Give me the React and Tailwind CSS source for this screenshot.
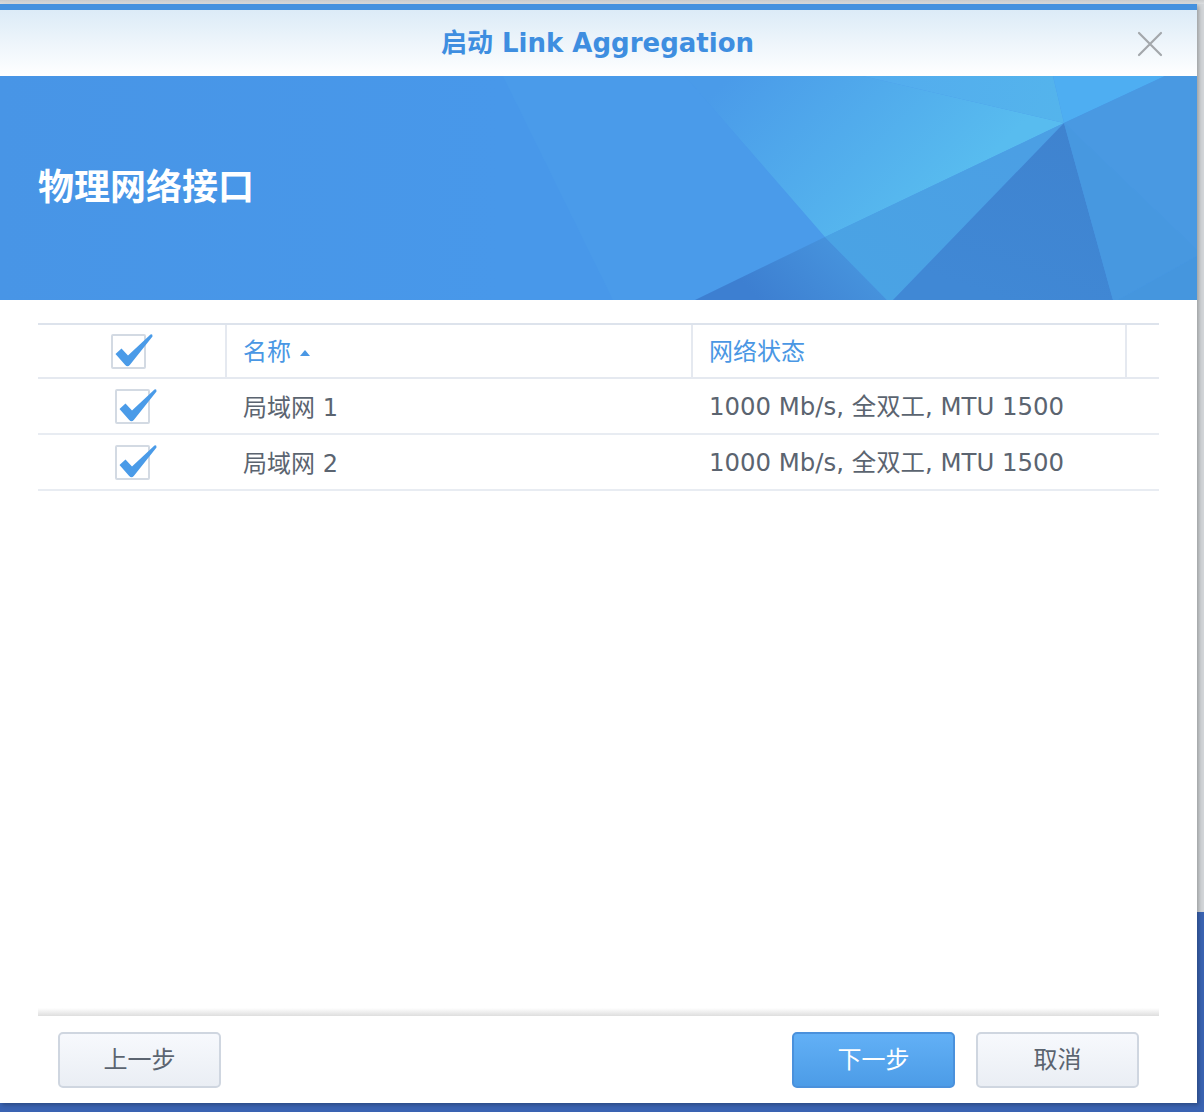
import React from "react";

const FONT = { fontFamily: '"DejaVu Sans", "Noto Sans CJK SC", sans-serif' };

function CheckMark() {
  return (
    <svg width="42" height="40" viewBox="0 0 42 40" className="absolute left-[-1px] top-[-6px]">
      <path
        d="M3.5 24 L9.5 18.5 L16 25.5 L38.5 4.5 Q40.8 3.8 40.5 6.5 L17.8 35 Q15.5 37.5 13.2 35 Z"
        fill="#4a9be8"
      />
    </svg>
  );
}

function CheckBox({ className = "" }) {
  return (
    <div className={`relative w-[35px] h-[35px] border-2 border-[#d3dae3] rounded-[2px] bg-white ${className}`}>
      <CheckMark />
    </div>
  );
}

function Banner() {
  return (
    <div className="relative h-[224px] bg-[#4797e8] overflow-hidden flex items-center pl-[38px]">
      <svg
        className="absolute inset-0"
        width="1197"
        height="224"
        viewBox="0 0 1197 224"
        preserveAspectRatio="none"
      >
        <defs>
          <linearGradient id="centerFacet" x1="720" y1="10" x2="890" y2="180" gradientUnits="userSpaceOnUse">
            <stop offset="0" stopColor="#4a9be9" />
            <stop offset="1" stopColor="#58bcef" />
          </linearGradient>
          <linearGradient id="topFacet" x1="870" y1="0" x2="1060" y2="50" gradientUnits="userSpaceOnUse">
            <stop offset="0" stopColor="#53acee" />
            <stop offset="1" stopColor="#54b4ec" />
          </linearGradient>
          <linearGradient id="lowLeft" x1="825" y1="160" x2="760" y2="224" gradientUnits="userSpaceOnUse">
            <stop offset="0" stopColor="#4692dc" />
            <stop offset="1" stopColor="#3d7fd1" />
          </linearGradient>
          <linearGradient id="lowMid" x1="1000" y1="60" x2="890" y2="224" gradientUnits="userSpaceOnUse">
            <stop offset="0" stopColor="#4b9fe4" />
            <stop offset="1" stopColor="#4aa3e4" />
          </linearGradient>
          <linearGradient id="darkFacet" x1="1064" y1="47" x2="1000" y2="224" gradientUnits="userSpaceOnUse">
            <stop offset="0" stopColor="#3f83cf" />
            <stop offset="1" stopColor="#4088d5" />
          </linearGradient>
          <linearGradient id="leftFade" x1="0" y1="0" x2="500" y2="0" gradientUnits="userSpaceOnUse">
            <stop offset="0" stopColor="#4895e6" />
            <stop offset="1" stopColor="#4898ea" />
          </linearGradient>
        </defs>
        <rect x="0" y="0" width="1197" height="224" fill="url(#leftFade)" />
        <polygon points="503,0 685,0 825,161 695,224 613,224" fill="#4a9bea" />
        <polygon points="685,0 863,0 1064,47 825,161" fill="url(#centerFacet)" />
        <polygon points="863,0 1053,0 1064,47" fill="url(#topFacet)" />
        <polygon points="1053,0 1165,0 1064,47" fill="#4eaef2" />
        <polygon points="1165,0 1197,0 1197,174 1064,47" fill="#4999e2" />
        <polygon points="695,224 825,161 887,224" fill="url(#lowLeft)" />
        <polygon points="825,161 1064,47 893,224 887,224" fill="url(#lowMid)" />
        <polygon points="1064,47 893,224 1113,224" fill="url(#darkFacet)" />
        <polygon points="1064,47 1197,174 1197,180 1118,224 1113,224" fill="#4798e0" />
        <polygon points="1118,224 1197,180 1197,224" fill="#4596de" />
      </svg>
      <h1 className="relative text-white font-bold text-[36px] leading-none" style={FONT}>
        物理网络接口
      </h1>
    </div>
  );
}

function Row({ name, status }) {
  return (
    <div className="flex h-[56px] border-b-2 border-[#e8ecf2] items-center pt-[3px] text-[24px] text-[#5b6470]">
      <div className="w-[187px] flex justify-center pl-[1px] -mt-[3px]">
        <CheckBox />
      </div>
      <div className="w-[466px] pl-[18px]">{name}</div>
      <div className="flex-1 pl-[18px] text-[24.4px]">{status}</div>
    </div>
  );
}

function Button({ children, primary }) {
  const look = primary
    ? "bg-gradient-to-b from-[#62b0f6] to-[#4c9ce7] border-[#4a91dc] text-white"
    : "bg-gradient-to-b from-[#f7f9fd] to-[#eaeef4] border-[#cfd6e0] text-[#5b6470]";
  return (
    <button
      className={`w-[163px] h-[56px] rounded-[5px] border-2 text-[24px] leading-none flex items-center justify-center ${look}`}
      style={FONT}
    >
      {children}
    </button>
  );
}

export default function App() {
  return (
    <div className="relative w-[1204px] h-[1112px] overflow-hidden bg-[#3a63b2]" style={FONT}>
      {/* window behind the dialog */}
      <div className="absolute left-0 top-0 w-[1204px] h-[912px] bg-gradient-to-r from-[#d9dbdd] to-[#d2d5d8]">
        <div className="h-[4px] bg-gradient-to-b from-[#c9cbcd] to-[#dcdee0]" />
      </div>

      {/* dialog */}
      <div className="absolute left-0 top-[4px] w-[1197px] h-[1099px] bg-white flex flex-col shadow-[2px_2px_4px_rgba(0,0,0,0.25)]">
        <div className="h-[6px] bg-[#4591df]" />
        <div className="relative h-[66px] bg-gradient-to-b from-[#dcebf7] to-white flex items-center justify-center">
          <div className="text-[26px] font-bold text-[#3e8ee0] leading-none -ml-[2px]" style={FONT}>
            启动 Link Aggregation
          </div>
          <svg
            className="absolute left-[1136px] top-[20px]"
            width="28"
            height="28"
            viewBox="0 0 28 28"
          >
            <path d="M3 3 L25 25 M25 3 L3 25" stroke="#a3a7ab" strokeWidth="2.2" strokeLinecap="round" />
          </svg>
        </div>

        <Banner />

        <div className="flex-1 flex flex-col px-[38px]">
          {/* grid */}
          <div className="mt-[23px] border-t-2 border-[#dde3ec]">
            <div className="flex h-[54px] border-b-2 border-[#e5e9f0] items-center text-[24px] text-[#4a97e4]">
              <div className="w-[187px] h-full flex items-center justify-center pr-[6px]">
                <CheckBox />
              </div>
              <div className="w-[466px] h-full border-l-2 border-[#e5e9f0] pl-[16px] pt-[2px] flex items-center gap-[8px]">
                <span>名称</span>
                <svg width="12" height="8" viewBox="0 0 12 8" className="mt-[1px]">
                  <polygon points="6,1 11,7 1,7" fill="#4a97e4" />
                </svg>
              </div>
              <div className="w-[434px] h-full border-l-2 border-[#e5e9f0] pl-[16px] pt-[2px] flex items-center">
                网络状态
              </div>
              <div className="flex-1 h-full border-l-2 border-[#e5e9f0]" />
            </div>
            <Row name="局域网 1" status="1000 Mb/s, 全双工, MTU 1500" />
            <Row name="局域网 2" status="1000 Mb/s, 全双工, MTU 1500" />
          </div>

          <div className="flex-1" />

          <div className="h-[8px] bg-gradient-to-b from-white to-[#dedede]" />

          <div className="flex items-center px-[20px] pt-[16px] pb-[15px]">
            <Button>上一步</Button>
            <div className="flex-1" />
            <div className="flex gap-[21px]">
              <Button primary>下一步</Button>
              <Button>取消</Button>
            </div>
          </div>
        </div>
      </div>
    </div>
  );
}
